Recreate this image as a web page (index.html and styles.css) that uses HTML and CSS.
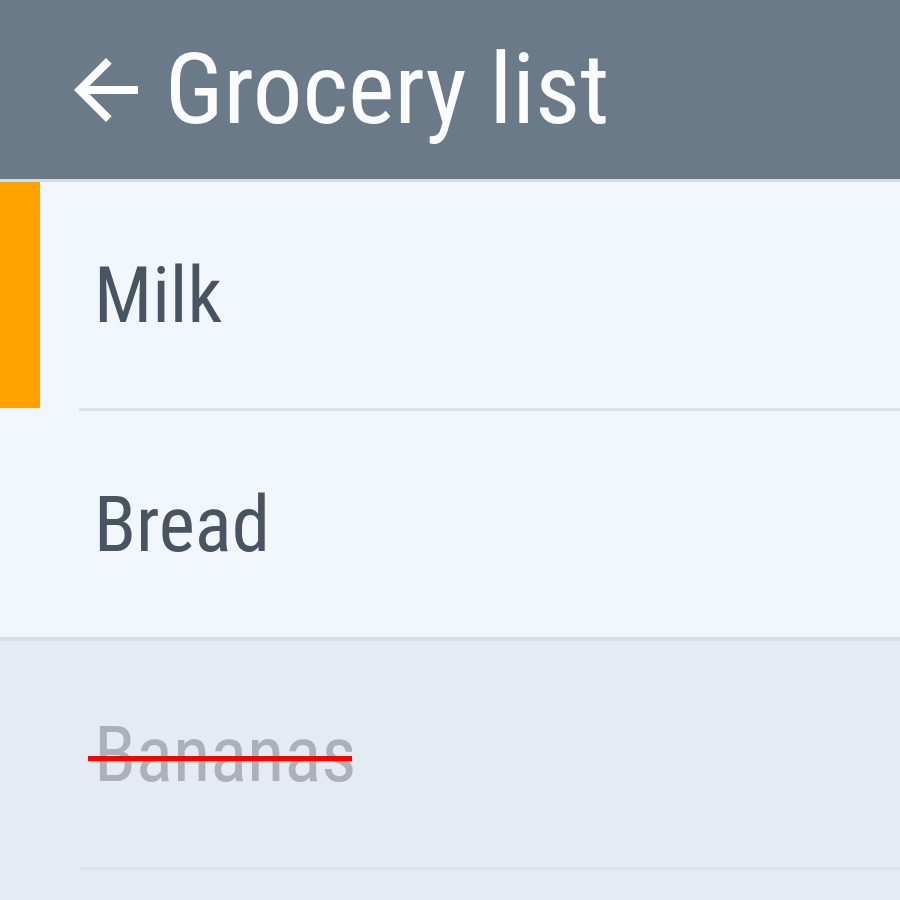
FILE: index.html
```html
<!DOCTYPE html>
<html>
<head>
<meta charset="utf-8">
<link rel="stylesheet" href="styles.css">
</head>
<body>
<header class="appbar">
  <svg class="back" viewBox="0 0 24 24" width="96" height="96"><path d="M20 11H7.83l5.59-5.59L12 4l-8 8 8 8 1.41-1.41L7.83 13H20v-2z" fill="#ffffff"/></svg>
  <h1 class="title">Grocery list</h1>
</header>
<ul class="list">
  <li class="item">
    <div class="content selected"><span class="label">Milk</span></div>
    <div class="divider"></div>
  </li>
  <li class="item">
    <div class="content"><span class="label">Bread</span></div>
  </li>
</ul>
<ul class="list done">
  <li class="item">
    <div class="content"><span class="label struck">Bananas</span></div>
    <div class="divider"></div>
  </li>
</ul>
</body>
</html>
```

FILE: styles.css
```css
html, body {
  margin: 0;
  padding: 0;
  background: #e4ebf2;
  font-family: "Roboto Condensed", Roboto, "Liberation Sans", sans-serif;
  font-stretch: condensed;
}
.appbar {
  height: 179px;
  background: #6b7a89;
  border-bottom: 3px solid #d3dbe3;
  display: flex;
  align-items: center;
  padding-left: 58px;
  gap: 11px;
}
.back {
  display: block;
  flex: none;
}
.title {
  margin: 0;
  color: #fbfcfd;
  font-weight: 400;
  font-size: 99px;
  line-height: 1;
}
.list {
  list-style: none;
  margin: 0;
  padding: 0;
  background: #f2f7fd;
}
.list.done {
  background: #e4ebf2;
  border-top: 4px solid #d8dfe5;
}
.content {
  height: 226px;
  display: flex;
  align-items: center;
  padding-left: 94px;
}
.content.selected {
  box-shadow: inset 40px 0 0 #ffa200;
}
.divider {
  height: 3px;
  margin-left: 79px;
  background: #dce2e8;
}
.label {
  font-size: 77px;
  line-height: 1;
  color: #485461;
  position: relative;
  top: 1px;
}
.done .label {
  color: #a9b1b9;
}
.struck::after {
  content: "";
  position: absolute;
  left: -6px;
  right: 4px;
  top: 39px;
  height: 5px;
  background: #ff0000;
}
```
